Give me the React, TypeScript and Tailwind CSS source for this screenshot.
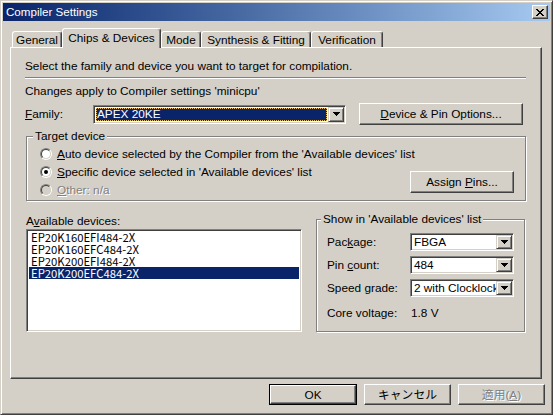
import React from "react";

const raised =
  "bg-[#d4d0c8] border border-t-white border-l-white border-r-[#404040] border-b-[#404040] shadow-[inset_-1px_-1px_#808080]";
const sunken =
  "border border-t-[#808080] border-l-[#808080] border-r-white border-b-white shadow-[inset_1px_1px_#404040,inset_-1px_-1px_#d4d0c8]";
const etched = "border border-[#808080] shadow-[inset_1px_1px_white,1px_1px_white]";
const disabledText = "text-[#808080] [text-shadow:1px_1px_0_white]";

function Btn({
  children,
  className = "",
}: {
  children: React.ReactNode;
  className?: string;
}) {
  return (
    <div className={`flex items-center justify-center ${raised} ${className}`}>
      {children}
    </div>
  );
}

function DropBtn() {
  return (
    <div className="w-[16px] h-full shrink-0 flex items-center justify-center bg-[#d4d0c8] border border-t-[#d4d0c8] border-l-[#d4d0c8] border-r-[#404040] border-b-[#404040] shadow-[inset_1px_1px_white,inset_-1px_-1px_#808080]">
      <svg width="7" height="4" viewBox="0 0 7 4" shapeRendering="crispEdges">
        <path d="M0 0h7v1H0z M1 1h5v1H1z M2 2h3v1H2z M3 3h1v1H3z" fill="#000" />
      </svg>
    </div>
  );
}

function Combo({ value, className = "" }: { value: string; className?: string }) {
  return (
    <div className={`flex h-[18px] bg-white p-[1px] ${sunken} ${className}`}>
      <div className="flex-1 flex items-center pl-[2px] overflow-hidden whitespace-nowrap">
        {value}
      </div>
      <DropBtn />
    </div>
  );
}

function Radio({ checked = false, disabled = false }: { checked?: boolean; disabled?: boolean }) {
  return (
    <span className="w-[12px] h-[12px] shrink-0 rounded-full border border-t-[#808080] border-l-[#808080] border-r-white border-b-white">
      <span
        className={`w-full h-full rounded-full border border-t-[#404040] border-l-[#404040] border-r-[#d4d0c8] border-b-[#d4d0c8] flex items-center justify-center ${
          disabled ? "bg-[#d4d0c8]" : "bg-white"
        }`}
      >
        {checked && <span className="w-[4px] h-[4px] rounded-full bg-black" />}
      </span>
    </span>
  );
}

function Tab({
  children,
  w,
  selected = false,
}: {
  children: React.ReactNode;
  w: string;
  selected?: boolean;
}) {
  if (selected) {
    return (
      <div
        className={`${w} h-[20px] relative z-10 -mb-[1px] flex items-start justify-center pt-[2px] bg-[#d4d0c8] rounded-t-[3px] border-t border-l border-r border-t-white border-l-white border-r-[#404040] shadow-[inset_-1px_0_#808080] whitespace-nowrap`}
      >
        {children}
      </div>
    );
  }
  return (
    <div
      className={`${w} h-[16px] flex items-start justify-center pt-[1px] bg-[#d4d0c8] rounded-t-[3px] border-t border-l border-r border-t-white border-l-white border-r-[#404040] shadow-[inset_-1px_0_#808080] whitespace-nowrap`}
    >
      {children}
    </div>
  );
}

function GroupBox({
  label,
  className = "",
  labelPos = "left-[6px]",
  children,
}: {
  label: string;
  className?: string;
  labelPos?: string;
  children: React.ReactNode;
}) {
  return (
    <div className={`relative ${etched} ${className}`}>
      <span className={`absolute -top-[8px] ${labelPos} px-[2px] bg-[#d4d0c8] leading-[14px] whitespace-nowrap`}>
        {label}
      </span>
      {children}
    </div>
  );
}

export default function App() {
  const devices = [
    "EP20K160EFI484-2X",
    "EP20K160EFC484-2X",
    "EP20K200EFI484-2X",
    "EP20K200EFC484-2X",
  ];
  return (
    <div className="w-[553px] h-[415px] overflow-hidden bg-[#d4d0c8] font-['Liberation_Sans','Noto_Sans_CJK_JP',sans-serif] text-[11.8px] leading-[14px] text-black border border-t-[#d4d0c8] border-l-[#d4d0c8] border-r-[#404040] border-b-[#404040] shadow-[inset_1px_1px_white,inset_-1px_-1px_#808080] p-[2px] flex flex-col">
      {/* Title bar */}
      <div className="h-[18px] shrink-0 flex items-center bg-linear-to-r from-[#0a246a] to-[#a6caf0] pl-[3px] pr-[2px]">
        <span className="flex-1 text-white text-[11.6px]">Compiler Settings</span>
        <div className={`w-[16px] h-[14px] flex items-center justify-center ${raised}`}>
          <svg width="8" height="7" viewBox="0 0 8 7" shapeRendering="crispEdges">
            <path
              d="M0 0h2v1H0z M6 0h2v1H6z M1 1h2v1H1z M5 1h2v1H5z M2 2h4v1H2z M3 3h2v1H3z M2 4h4v1H2z M1 5h2v1H1z M5 5h2v1H5z M0 6h2v1H0z M6 6h2v1H6z"
              fill="#000"
            />
          </svg>
        </div>
      </div>

      {/* Tabs */}
      <div className="mt-[6px] ml-[9px] h-[20px] flex items-end shrink-0">
        <Tab w="w-[50px]">General</Tab>
        <Tab w="w-[99px]" selected>
          Chips &amp; Devices
        </Tab>
        <Tab w="w-[40px]">Mode</Tab>
        <Tab w="w-[110px]">Synthesis &amp; Fitting</Tab>
        <Tab w="w-[72px]">Verification</Tab>
      </div>

      {/* Panel */}
      <div className="ml-[7px] w-[532px] h-[332px] shrink-0 bg-[#d4d0c8] border border-t-white border-l-white border-r-[#404040] border-b-[#404040] shadow-[inset_-1px_-1px_#808080] pl-[14px] pr-[15px] flex flex-col">
        <div className="mt-[11px]">Select the family and device you want to target for compilation.</div>
        <div className="mt-[4px] h-[2px] border-t border-t-[#808080] border-b border-b-white" />
        <div className="mt-[5px]">Changes apply to Compiler settings 'minicpu'</div>

        {/* Family row */}
        <div className="mt-[5px] h-[22px] flex items-center">
          <div className="w-[68px]">
            <u>F</u>amily:
          </div>
          <div className={`w-[253px] h-[19px] flex bg-white p-[1px] ${sunken}`}>
            <div className="flex-1 p-[1px]">
              <div className="h-full bg-[#0a246a] text-white flex items-center pl-[1px] outline outline-1 outline-dotted outline-[#f0c060] -outline-offset-1">
                APEX 20KE
              </div>
            </div>
            <DropBtn />
          </div>
          <Btn className="ml-[13px] w-[164px] h-[22px]">
            <span>
              <u>D</u>evice &amp; Pin Options...
            </span>
          </Btn>
        </div>

        {/* Target device */}
        <GroupBox label="Target device" className="mt-[11px] ml-[1px] h-[65px] pt-[8px] pl-[13px] pr-[11px] flex">
          <div className="flex-1 min-w-0 flex flex-col">
            <div className="h-[18px] flex items-center gap-[5px] whitespace-nowrap">
              <Radio />
              <span>
                <u>A</u>uto device selected by the Compiler from the 'Available devices' list
              </span>
            </div>
            <div className="h-[18px] flex items-center gap-[5px] whitespace-nowrap">
              <Radio checked />
              <span>
                <u>S</u>pecific device selected in 'Available devices' list
              </span>
            </div>
            <div className="h-[18px] flex items-center gap-[5px] whitespace-nowrap">
              <Radio disabled />
              <span className={disabledText}>
                <u>O</u>ther: n/a
              </span>
            </div>
          </div>
          <Btn className="self-end shrink-0 mb-[7px] w-[104px] h-[22px]">
            <span>
              Assign <u>P</u>ins...
            </span>
          </Btn>
        </GroupBox>

        {/* Bottom section */}
        <div className="mt-[13px] ml-[1px] flex items-start">
          <div className="w-[276px] flex flex-col">
            <div>
              A<u>v</u>ailable devices:
            </div>
            <div className={`mt-[1px] h-[103px] bg-white px-[2px] pt-[1px] ${sunken}`}>
              {devices.map((d, i) => (
                <div
                  key={d}
                  className={`h-[12px] leading-[12px] pl-[2px] font-['Noto_Sans_CJK_JP',sans-serif] text-[11.3px] ${
                    i === 3 ? "bg-[#0a246a] text-white" : ""
                  }`}
                >
                  {d}
                </div>
              ))}
            </div>
          </div>

          <GroupBox
            label="Show in 'Available devices' list"
            labelPos="left-[4px]"
            className="ml-[14px] mt-[5px] w-[209px] h-[113px] pt-[13px] pl-[10px] flex flex-col"
          >
            <div className="flex items-center h-[18px]">
              <div className="w-[83px]">
                Pac<u>k</u>age:
              </div>
              <Combo value="FBGA" className="w-[104px]" />
            </div>
            <div className="mt-[5px] flex items-center h-[18px]">
              <div className="w-[83px]">
                Pin <u>c</u>ount:
              </div>
              <Combo value="484" className="w-[104px]" />
            </div>
            <div className="mt-[5px] flex items-center h-[18px]">
              <div className="w-[83px]">
                Speed <u>g</u>rade:
              </div>
              <Combo value="2 with Clocklock" className="w-[104px]" />
            </div>
            <div className="mt-[7px] flex items-center h-[18px]">
              <div className="w-[83px]">Core voltage:</div>
              <div className="pl-[1px]">1.8 V</div>
            </div>
          </GroupBox>
        </div>
      </div>

      {/* Buttons */}
      <div className="mt-[5px] pr-[5px] flex justify-end gap-[7px]">
        <div className="w-[88px] h-[21px] border border-black">
          <Btn className="w-full h-full">OK</Btn>
        </div>
        <Btn className="w-[87px] h-[21px]">キャンセル</Btn>
        <Btn className="w-[87px] h-[21px]">
          <span className={disabledText}>
            適用(<u>A</u>)
          </span>
        </Btn>
      </div>
    </div>
  );
}
